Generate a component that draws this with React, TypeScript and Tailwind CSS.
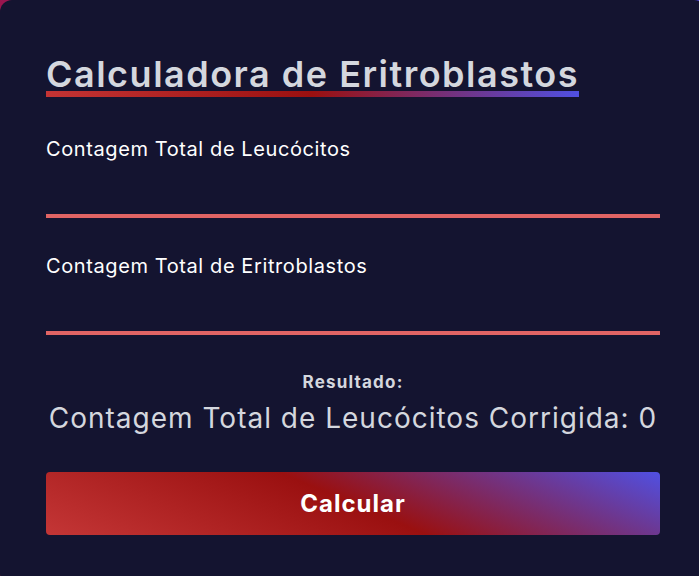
import React, { useState } from 'react';

const fieldClass =
  'w-full h-[59px] bg-transparent border-0 border-b-4 border-[#e06464] text-white text-[20px] outline-none';

export default function App() {
  const [leucocitos, setLeucocitos] = useState('');
  const [eritroblastos, setEritroblastos] = useState('');
  const [resultado, setResultado] = useState(0);

  const calcular = () => {
    const l = parseFloat(leucocitos) || 0;
    const e = parseFloat(eritroblastos) || 0;
    setResultado(l > 0 ? Math.round(((l * 100) / (100 + e)) * 100) / 100 : 0);
  };

  return (
    <div className="w-full h-[576px] overflow-hidden bg-[linear-gradient(to_top_right,#e03a3a,#a01040_45%,#5a4be0)] font-['Inter','Liberation_Sans',sans-serif]">
      <div className="w-[706px] h-[586px] rounded-xl bg-[#141430] px-[46px] pt-[56px]">
        <div className="inline-flex flex-col">
          <h1 className="text-[36px] leading-none font-semibold text-[#d4d7de] tracking-[1.5px]">
            Calculadora de Eritroblastos
          </h1>
          <div className="h-[6px] -mt-[1px] bg-[linear-gradient(to_right,#c43434,#9a1010_50%,#5050e2)]" />
        </div>

        <div className="w-[614px] mt-[42px]">
          <label htmlFor="leucocitos" className="block text-[20px] leading-none text-white tracking-[0.6px]">
            Contagem Total de Leucócitos
          </label>
          <input
            id="leucocitos"
            type="number"
            className={fieldClass}
            value={leucocitos}
            onChange={(e) => setLeucocitos(e.target.value)}
          />

          <label htmlFor="eritroblastos" className="block mt-[38px] text-[20px] leading-none text-white tracking-[0.6px]">
            Contagem Total de Eritroblastos
          </label>
          <input
            id="eritroblastos"
            type="number"
            className={fieldClass}
            value={eritroblastos}
            onChange={(e) => setEritroblastos(e.target.value)}
          />

          <div className="mt-[39px] flex flex-col items-center">
            <p className="text-[17px] leading-none font-bold text-[#d4d7de] tracking-[1.2px]">Resultado:</p>
            <p className="mt-[13px] whitespace-nowrap text-[28px] leading-none text-[#d4d7de] tracking-[1px]">
              Contagem Total de Leucócitos Corrigida: {resultado}
            </p>
          </div>

          <button
            type="button"
            onClick={calcular}
            className="mt-[40px] w-full h-[63px] rounded-[4px] bg-[linear-gradient(23deg,#c43636,#9a1010_50%,#5050e2)] text-white text-[24px] font-bold tracking-[1px]"
          >
            Calcular
          </button>
        </div>
      </div>
    </div>
  );
}
